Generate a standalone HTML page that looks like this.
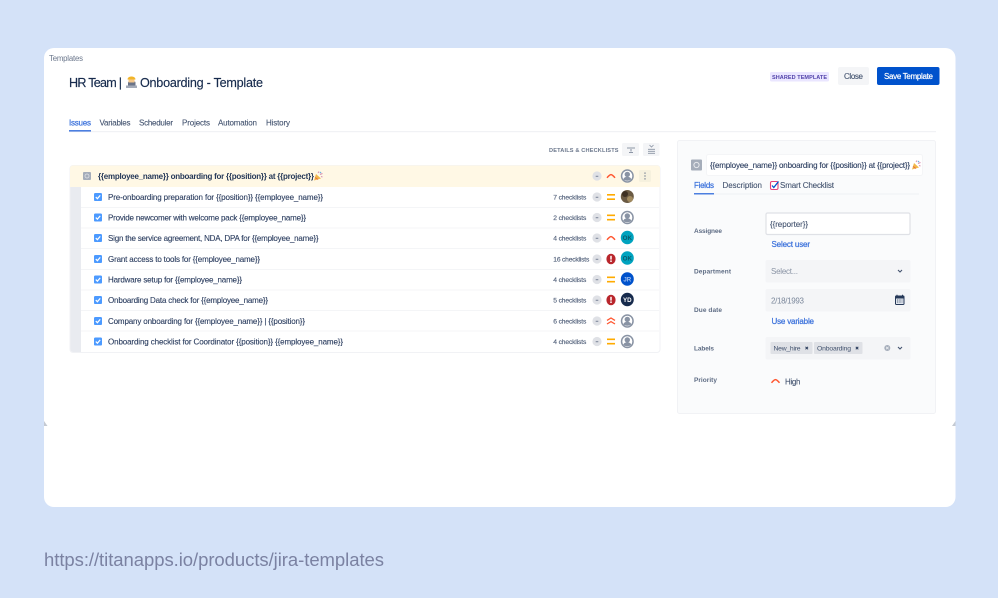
<!DOCTYPE html>
<html>
<head>
<meta charset="utf-8">
<style>
html,body{margin:0;padding:0;background:#d4e2f8;width:998px;height:598px;overflow:hidden}
svg{display:block}
text{font-family:"Liberation Sans",sans-serif;font-size:8px;fill:#253858}
.shot{filter:blur(.3px)}
.g{fill:#6b778c}
.n{fill:#42526e;stroke:#42526e;stroke-width:.1px}
.b{fill:#3f74dc;stroke:#3f74dc;stroke-width:.25px}
.r{fill:#2c3e60;stroke:#2c3e60;stroke-width:.12px}
.c{font-size:6.7px;fill:#505f79;stroke:#505f79;stroke-width:.14px}
.l{font-size:6.5px;fill:#5e6c84;font-weight:bold}
.t{font-size:12.6px;fill:#172b4d;stroke:#172b4d;stroke-width:.15px}
.sep{stroke:#f4f5f7;stroke-width:1}
.av{font-size:6.2px;font-weight:bold}
</style>
</head>
<body>
<svg width="998" height="598" viewBox="0 0 998 598" xmlns="http://www.w3.org/2000/svg">
<defs>
<g id="chk"><rect x="-4" y="-4" width="8" height="8" rx="1.300" fill="#4c9aff"/><path d="M-2.200 0.100L-0.600 1.700L2.200-1.600" fill="none" stroke="#fff" stroke-width="1.200"/></g>
<g id="dash"><circle r="4.600" fill="#dfe1e6"/><rect x="-1.300" y="-0.200" width="2.600" height="0.900" fill="#6b778c"/></g>
<g id="eq"><path d="M-4-2.200H4M-4 2.200H4" stroke="#ffab00" stroke-width="1.600" fill="none"/></g>
<g id="hi"><path d="M-4 1.800C-2.500 0-1.300-1.400 0-1.400C1.300-1.400 2.500 0 4 1.800" stroke="#ff5630" stroke-width="1.500" fill="none"/></g>
<g id="top"><path d="M-4-0.600L0-3L4-0.600M-4 3L0 0.600L4 3" stroke="#ff5630" stroke-width="1.300" fill="none"/></g>
<g id="blk"><ellipse rx="4.600" ry="5.300" fill="#b9262c"/><rect x="-0.900" y="-3.200" width="1.800" height="3.800" fill="#f5dada"/><rect x="-0.900" y="1.400" width="1.800" height="1.600" fill="#f5dada"/></g>
<g id="usr"><ellipse rx="6.500" ry="6.800" fill="#8993a4"/><ellipse rx="5" ry="5.300" fill="#fff"/><circle cy="-1.600" r="2.700" fill="#8993a4"/><path d="M-4 3.200C-3 1-1.500 .900 0 .900C1.500 .900 3 1 4 3.200C2.500 5.200-2.500 5.200-4 3.200Z" fill="#8993a4"/></g>
<g id="party"><path d="M-4 4.500L-2-2L3 2.500Z" fill="#f2b84b"/><path d="M-3 1.500L0 3.500" stroke="#e5683f" stroke-width=".9"/><path d="M0-3L1-4.500M2-1.500L4.500-2.500M3 .5L4.500 1" stroke="#d88fb0" stroke-width="1"/><circle cx="2.500" cy="-3.500" r=".8" fill="#6fb3e0"/></g>
</defs>

<rect width="998" height="598" fill="#d4e2f8"/>
<rect x="44" y="48" width="911.500" height="459" rx="10" fill="#fff"/>
<path d="M44 421L47.500 426H44ZM955.500 421L952 426H955.500Z" fill="#c4c9d2"/>

<g class="shot">
<text x="49" y="61" class="g" style="font-size:7.800px" textLength="34">Templates</text>

<text x="69" y="87" class="t" textLength="53">HR Team |</text>
<!-- worker emoji -->
<rect x="128" y="81.500" width="7.500" height="5" rx="1" fill="#6b7488"/>
<rect x="126" y="85.500" width="11" height="2.500" fill="#a3aab8"/>
<rect x="128.500" y="79" width="6" height="3.500" fill="#f6c98d"/>
<path d="M127.500 79.500C127.500 75.500 135.500 75.500 135.500 79.500Z" fill="#f2b52a"/>
<text x="140" y="87" class="t" textLength="123">Onboarding - Template</text>

<rect x="770" y="72" width="59" height="9.500" rx="1.500" fill="#eae6ff"/>
<text x="772" y="79" style="font-size:5.500px;font-weight:bold;fill:#5243aa" textLength="55">SHARED TEMPLATE</text>
<rect x="838" y="67" width="31" height="18" rx="2" fill="#f4f5f7"/>
<text x="844" y="79" class="n" textLength="19">Close</text>
<rect x="877" y="67" width="62.500" height="18" rx="2" fill="#0052cc"/>
<text x="884" y="79" style="fill:#fff;stroke:#fff;stroke-width:.2px" textLength="49">Save Template</text>

<!-- tabs -->
<text x="69" y="125.500" class="b" textLength="22">Issues</text>
<text x="99.500" y="125.500" class="n" textLength="31">Variables</text>
<text x="139" y="125.500" class="n" textLength="34">Scheduler</text>
<text x="182" y="125.500" class="n" textLength="28">Projects</text>
<text x="218" y="125.500" class="n" textLength="39">Automation</text>
<text x="266" y="125.500" class="n" textLength="24">History</text>
<rect x="69" y="131" width="867" height="1.200" fill="#f1f2f5"/>
<rect x="69" y="130" width="22" height="1.600" fill="#4c7fe0"/>

<!-- toolbar -->
<text x="549" y="152" style="font-size:5.600px;font-weight:bold;fill:#6b778c" textLength="69.500">DETAILS &amp; CHECKLISTS</text>
<rect x="622" y="143" width="17" height="13" rx="1.500" fill="#f4f5f7"/>
<path d="M627 148H635M629 152.500H633M631 149V151.500" stroke="#6b778c" stroke-width=".8" fill="none"/>
<rect x="643" y="143" width="16.500" height="13" rx="1.500" fill="#f4f5f7"/>
<path d="M648 149.300H655M648 151.300H655M648 153.300H655M649.500 145L651.500 147L653.500 145" stroke="#8993a4" stroke-width=".8" fill="none"/>

<!-- table -->
<rect x="70" y="165.500" width="590" height="187" rx="3" fill="#fff" stroke="#f1f2f5"/>
<path d="M70.500 187H81V352H73A2.500 2.500 0 0 1 70.500 349.500Z" fill="#e9ebf0"/>
<path d="M70 187V168.500A3 3 0 0 1 73 165.500H657A3 3 0 0 1 660 168.500V187Z" fill="#fff8e5"/>
<rect x="83" y="172" width="8" height="8" rx="1" fill="#a5adba"/>
<circle cx="87" cy="176" r="2" fill="none" stroke="#dfe1e6" stroke-width=".8"/>
<text x="98" y="179" style="font-weight:bold;fill:#253858" textLength="216">{{employee_name}} onboarding for {{position}} at {{project}}</text>
<use href="#party" x="318" y="176"/>
<use href="#dash" x="597" y="176"/>
<use href="#hi" x="611" y="176"/>
<use href="#usr" x="627.300" y="176"/>
<rect x="639" y="170" width="12" height="12" rx="1.500" fill="#f6f1de"/>
<path d="M645 172.500V173.700M645 175.400V176.600M645 178.300V179.500" stroke="#5e6c84" stroke-width="1.100"/>

<path class="sep" d="M81 207.500H659M81 228H659M81 248.500H659M81 269.500H659M81 290H659M81 310.500H659M81 331H659"/>

<use href="#chk" x="98" y="197"/>
<text class="r" x="108" y="200" textLength="215">Pre-onboarding preparation for {{position}} {{employee_name}}</text>
<text class="c" x="553.300" y="199.500" textLength="33">7 checklists</text>
<use href="#dash" x="597" y="197"/><use href="#eq" x="611" y="197"/>
<circle cx="627.300" cy="196.500" r="6.500" fill="#6a5a43"/><circle cx="625" cy="194" r="3" fill="#3d3023"/><circle cx="630" cy="199" r="3" fill="#a18a5f"/>

<use href="#chk" x="98" y="217.500"/>
<text class="r" x="108" y="220.500" textLength="198">Provide newcomer with welcome pack {{employee_name}}</text>
<text class="c" x="553.300" y="220" textLength="33">2 checklists</text>
<use href="#dash" x="597" y="217.500"/><use href="#eq" x="611" y="217.500"/><use href="#usr" x="627.300" y="217.500"/>

<use href="#chk" x="98" y="238"/>
<text class="r" x="108" y="241" textLength="210.500">Sign the service agreement, NDA, DPA for {{employee_name}}</text>
<text class="c" x="553.300" y="240.500" textLength="33">4 checklists</text>
<use href="#dash" x="597" y="238"/><use href="#hi" x="611" y="238"/>
<ellipse cx="627.300" cy="237.500" rx="6.500" ry="6.800" fill="#00a3bf"/><text class="av" x="627.300" y="239.800" text-anchor="middle" style="fill:#0b5a6b">OK</text>

<use href="#chk" x="98" y="259"/>
<text class="r" x="108" y="262" textLength="152">Grant access to tools for {{employee_name}}</text>
<text class="c" x="553.300" y="261.500" textLength="36">16 checklists</text>
<use href="#dash" x="597" y="259"/><use href="#blk" x="611" y="259"/>
<ellipse cx="627.300" cy="258" rx="6.500" ry="6.800" fill="#00a3bf"/><text class="av" x="627.300" y="260.300" text-anchor="middle" style="fill:#0b5a6b">OK</text>

<use href="#chk" x="98" y="279.500"/>
<text class="r" x="108" y="282.500" textLength="134">Hardware setup for {{employee_name}}</text>
<text class="c" x="553.300" y="282" textLength="33">4 checklists</text>
<use href="#dash" x="597" y="279.500"/><use href="#eq" x="611" y="279.500"/>
<ellipse cx="627.300" cy="279" rx="6.500" ry="6.800" fill="#0052cc"/><text class="av" x="627.300" y="281.300" text-anchor="middle" style="fill:#9fc0f2">JR</text>

<use href="#chk" x="98" y="300"/>
<text class="r" x="108" y="303" textLength="160">Onboarding Data check for {{employee_name}}</text>
<text class="c" x="553.300" y="302.500" textLength="33">5 checklists</text>
<use href="#dash" x="597" y="300"/><use href="#blk" x="611" y="300"/>
<ellipse cx="627.300" cy="299.500" rx="6.500" ry="6.800" fill="#172b4d"/><text class="av" x="627.300" y="301.800" text-anchor="middle" style="fill:#fff">YD</text>

<use href="#chk" x="98" y="321"/>
<text class="r" x="108" y="324" textLength="197">Company onboarding for {{employee_name}} | {{position}}</text>
<text class="c" x="553.300" y="323.500" textLength="33">6 checklists</text>
<use href="#dash" x="597" y="321"/><use href="#top" x="611" y="321"/><use href="#usr" x="627.300" y="321"/>

<use href="#chk" x="98" y="341.500"/>
<text class="r" x="108" y="344.500" textLength="235">Onboarding checklist for Coordinator {{position}} {{employee_name}}</text>
<text class="c" x="553.300" y="344" textLength="33">4 checklists</text>
<use href="#dash" x="597" y="341.500"/><use href="#eq" x="611" y="341.500"/><use href="#usr" x="627.300" y="341.500"/>

<!-- right panel -->
<rect x="677.500" y="140.500" width="258" height="273" rx="2" fill="#fafbfc" stroke="#f1f2f5"/>
<rect x="691" y="159.500" width="11" height="11" rx="1" fill="#a5adba"/>
<circle cx="696.500" cy="165" r="2.600" fill="none" stroke="#e6e8ec" stroke-width="1"/>
<rect x="706.500" y="154.500" width="216" height="21" rx="2" fill="#fff" stroke="#f4f5f7"/>
<text x="710" y="168" class="r" textLength="200">{{employee_name}} onboarding for {{position}} at {{project}}</text>
<use href="#party" x="916" y="165"/>

<text x="694" y="188" class="b" textLength="20">Fields</text>
<text x="722.500" y="188" class="n" textLength="39.500">Description</text>
<rect x="770.500" y="181.500" width="7.500" height="8" rx="1.500" fill="#fff" stroke="#e5447a" stroke-width="1.100"/>
<path d="M772 185.500L773.800 187.500L778.500 181.500" fill="none" stroke="#0052cc" stroke-width="1.300"/>
<text x="780" y="188" class="n" textLength="54">Smart Checklist</text>
<rect x="694" y="193.500" width="225" height="1" fill="#eff1f4"/>
<rect x="694" y="193" width="20" height="1.500" fill="#4c7fe0"/>

<text class="l" x="694" y="233" textLength="28">Assignee</text>
<rect x="766" y="213" width="144" height="21.500" rx="1.500" fill="#fff" stroke="#dfe1e6" stroke-width="1.200"/>
<text x="770" y="227" class="n" textLength="38">{{reporter}}</text>
<text x="771.500" y="247" class="b" textLength="38.500">Select user</text>

<text class="l" x="694" y="273.500" textLength="37">Department</text>
<rect x="765.500" y="260" width="145" height="22.500" rx="2" fill="#f4f5f7"/>
<text x="771" y="274" style="fill:#8993a4" textLength="27">Select...</text>
<path d="M898 270L900 272L902 270" fill="none" stroke="#42526e" stroke-width="1.100"/>

<text class="l" x="694" y="312" textLength="28">Due date</text>
<rect x="765.500" y="289" width="145" height="22.500" rx="2" fill="#f4f5f7"/>
<text x="771" y="303.500" style="fill:#7a869a" textLength="33">2/18/1993</text>
<rect x="895" y="295.500" width="9.500" height="9.500" rx="1.200" fill="#253858"/>
<rect x="896" y="298.500" width="7.500" height="5.500" fill="#dfe4ec"/>
<path d="M897 296V294.800M902.500 296V294.800" stroke="#253858" stroke-width="1"/>
<path d="M897 300H902.500M897 302H902.500" stroke="#253858" stroke-width=".8" stroke-dasharray="1 .7"/>
<text x="771.500" y="324" class="b" textLength="42.500">Use variable</text>

<text class="l" x="694" y="350.500" textLength="20">Labels</text>
<rect x="765.500" y="337" width="145" height="22.500" rx="2" fill="#f4f5f7"/>
<rect x="770.500" y="342" width="42" height="12" rx="1" fill="#dfe1e6"/>
<text x="773.500" y="350.500" style="font-size:6.800px;fill:#42526e" textLength="27">New_hire</text>
<path d="M805.500 346.800L808 349.300M808 346.800L805.500 349.300" stroke="#253858" stroke-width="1"/>
<rect x="814" y="342" width="48.500" height="12" rx="1" fill="#dfe1e6"/>
<text x="817" y="350.500" style="font-size:6.800px;fill:#42526e" textLength="34">Onboarding</text>
<path d="M855.800 346.800L858.300 349.300M858.300 346.800L855.800 349.300" stroke="#253858" stroke-width="1"/>
<circle cx="887.300" cy="348" r="3" fill="#a5adba"/>
<path d="M886 346.700L888.600 349.300M888.600 346.700L886 349.300" stroke="#f4f5f7" stroke-width=".7"/>
<path d="M898 347L900 349L902 347" fill="none" stroke="#42526e" stroke-width="1.100"/>

<text class="l" x="694" y="382" textLength="23">Priority</text>
<use href="#hi" x="775.500" y="381"/>
<text x="785" y="384.500" class="n" textLength="15.500">High</text>
</g>

<text x="44" y="566" style="font-size:18.500px;fill:#7b82a2" textLength="340">https://titanapps.io/products/jira-templates</text>
</svg>
</body>
</html>
